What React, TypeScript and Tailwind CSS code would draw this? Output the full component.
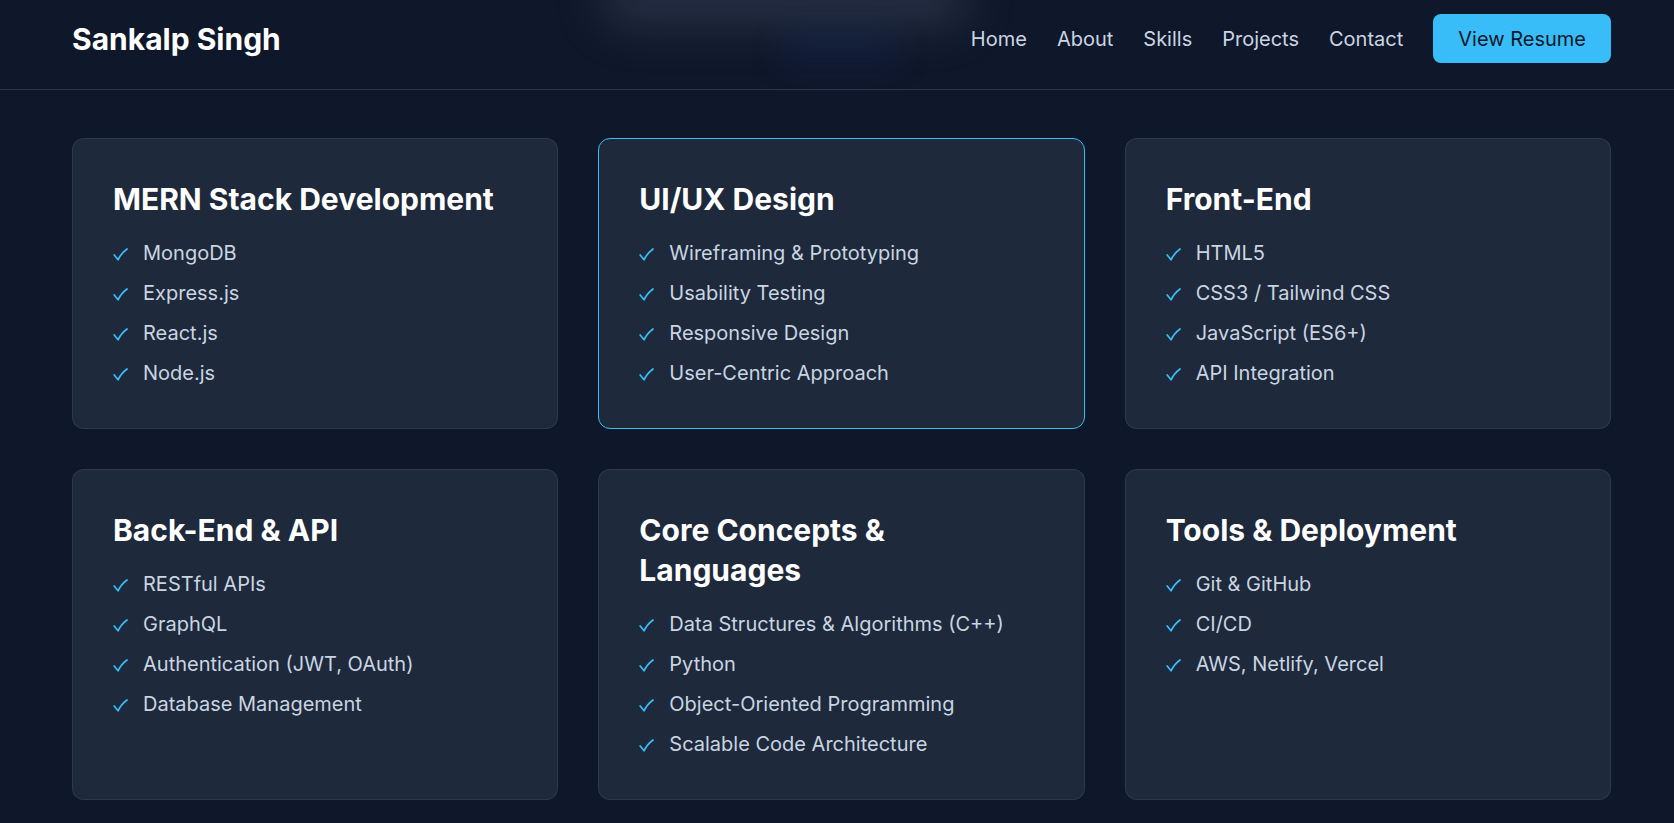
import React from 'react';

const NAV = ['Home', 'About', 'Skills', 'Projects', 'Contact'];

const SKILLS = [
    { title: 'MERN Stack Development', items: ['MongoDB', 'Express.js', 'React.js', 'Node.js'] },
    { title: 'UI/UX Design', items: ['Wireframing & Prototyping', 'Usability Testing', 'Responsive Design', 'User-Centric Approach'], active: true },
    { title: 'Front-End', items: ['HTML5', 'CSS3 / Tailwind CSS', 'JavaScript (ES6+)', 'API Integration'] },
    { title: 'Back-End & API', items: ['RESTful APIs', 'GraphQL', 'Authentication (JWT, OAuth)', 'Database Management'] },
    { title: 'Core Concepts & Languages', items: ['Data Structures & Algorithms (C++)', 'Python', 'Object-Oriented Programming', 'Scalable Code Architecture'] },
    { title: 'Tools & Deployment', items: ['Git & GitHub', 'CI/CD', 'AWS, Netlify, Vercel'] },
];

const Check = () => (
    <svg width="15" height="13" viewBox="0 0 15 13" className="shrink-0 mt-[9px]" fill="none">
        <path d="M1.2 7 L5 11.8 C7 7.6 10 4 14 1" stroke="#38bdf8" strokeWidth="1.7" strokeLinecap="round" strokeLinejoin="round" />
    </svg>
);

const Header = () => (
    <header className="relative overflow-hidden bg-[#0f172a] border-b border-[#2b3547]">
        <div className="absolute left-[600px] top-[-28px] w-[370px] h-[52px] rounded-full bg-slate-400/20 blur-xl" />
        <div className="absolute left-[780px] top-[38px] w-[120px] h-[24px] rounded-full bg-blue-900/20 blur-lg" />
        <div className="relative flex items-center justify-between pl-[72px] pr-[63px] pt-[14px] pb-[26px]">
            <div className="text-[30px] leading-9 font-bold text-white">Sankalp Singh</div>
            <nav className="flex items-center gap-[30px]">
                {NAV.map(n => (
                    <a key={n} className="text-xl leading-7 text-slate-300">{n}</a>
                ))}
                <button className="h-[49px] px-[25px] rounded-lg bg-[#38bdf8] text-xl leading-7 text-[#0f172a]">View Resume</button>
            </nav>
        </div>
    </header>
);

export default function App() {
    return (
        <div className="min-h-screen bg-[#0f172a]" style={{ fontFamily: 'Inter, "Noto Sans", sans-serif' }}>
            <Header />
            <section className="pl-[72px] pr-[63px] pt-[48px] pb-10">
                <div className="grid grid-cols-3 gap-10">
                    {SKILLS.map(s => (
                        <div
                            key={s.title}
                            className={`rounded-xl bg-[#1e293b] px-10 pt-10 pb-[41px] border ${s.active ? 'border-[#38bdf8]' : 'border-[#334155]/70'}`}
                        >
                            <h3 className="text-3xl leading-10 font-bold text-white mb-5">{s.title}</h3>
                            <ul className="flex flex-col gap-3">
                                {s.items.map(i => (
                                    <li key={i} className="flex items-start gap-[15px] text-xl leading-7 text-slate-300">
                                        <Check />
                                        <span>{i}</span>
                                    </li>
                                ))}
                            </ul>
                        </div>
                    ))}
                </div>
            </section>
        </div>
    );
}
